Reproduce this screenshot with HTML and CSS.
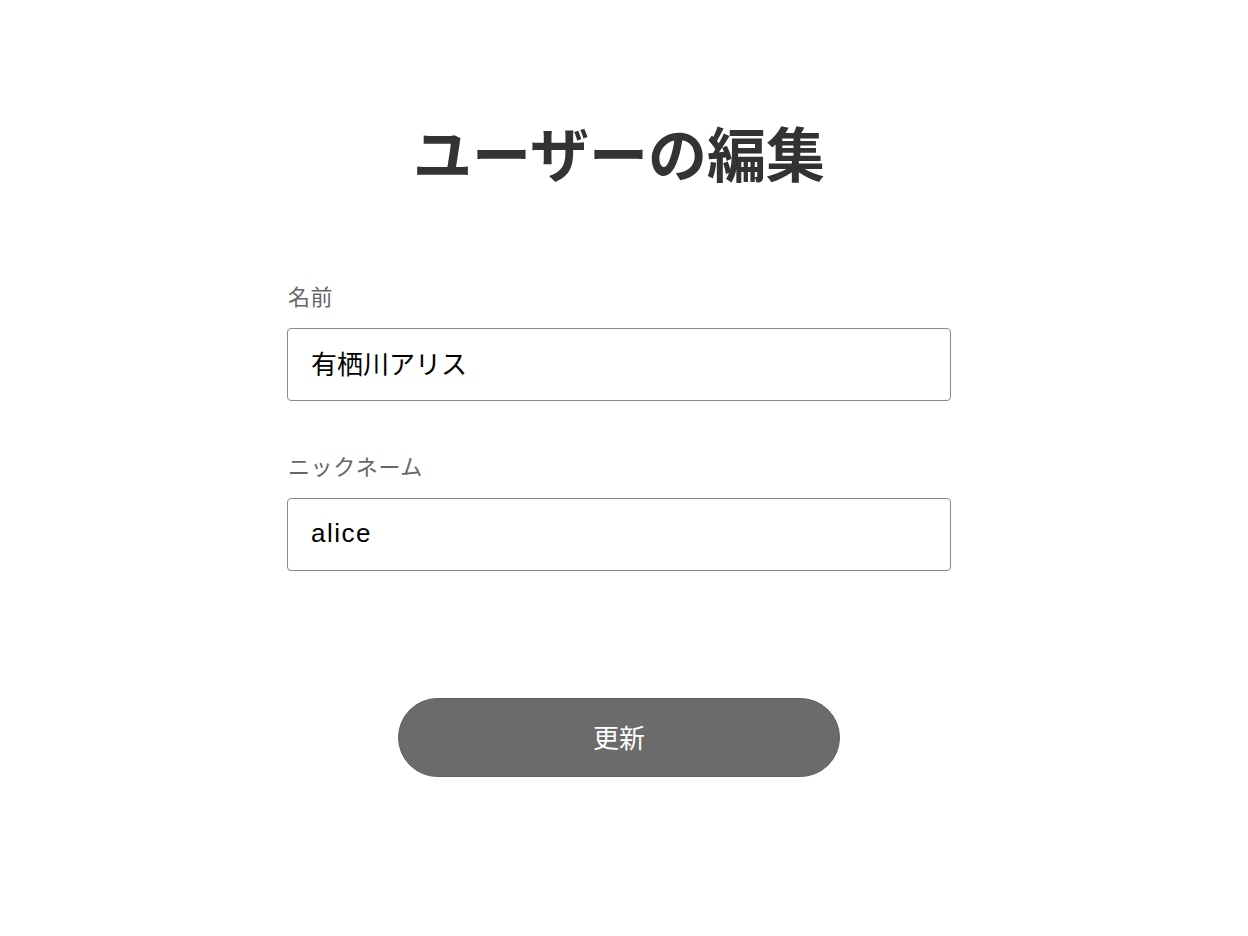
FILE: index.html
```html
<!DOCTYPE html>
<html lang="ja">
<head>
<meta charset="utf-8">
<link rel="stylesheet" href="styles.css">
</head>
<body>
<main class="page">
  <h1 class="title">ユーザーの編集</h1>
  <form class="form">
    <div class="field">
      <label class="label">名前</label>
      <div class="input">有栖川アリス</div>
    </div>
    <div class="field">
      <label class="label">ニックネーム</label>
      <div class="input input-latin">alice</div>
    </div>
    <div class="actions">
      <button type="button" class="btn">更新</button>
    </div>
  </form>
</main>
</body>
</html>
```
FILE: styles.css
```css
html, body { margin: 0; padding: 0; background: #fff; }
body {
  font-family: "Noto Sans CJK JP", "Noto Sans", sans-serif;
  padding-right: 10px;
}
.page {
  display: flex;
  flex-direction: column;
  align-items: center;
  padding-top: 113px;
}
.title {
  margin: 0;
  font-size: 59px;
  line-height: 78px;
  font-weight: 700;
  color: #333;
}
.form {
  width: 664px;
  margin-top: 91px;
  display: flex;
  flex-direction: column;
}
.field { display: flex; flex-direction: column; margin-bottom: 51px; }
.label {
  font-size: 22px;
  line-height: 26px;
  letter-spacing: 0.6px;
  color: #666;
  margin-bottom: 20px;
  padding-left: 1px;
}
.input {
  box-sizing: border-box;
  height: 73px;
  border: 1px solid #8a8a8a;
  border-radius: 4px;
  padding: 0 23px 4px;
  display: flex;
  align-items: center;
  font-size: 26px;
  color: #000;
}
.input-latin {
  font-family: "Liberation Sans", "Noto Sans CJK JP", sans-serif;
  letter-spacing: 1.5px;
  padding-bottom: 2px;
}
.actions { display: flex; justify-content: center; margin-top: 76px; }
.btn {
  width: 442px;
  height: 79px;
  border-radius: 40px;
  background: #6b6b6b;
  border: 1px solid #5e5e5e;
  color: #fff;
  font-family: inherit;
  font-size: 26px;
  padding-bottom: 4px;
  cursor: pointer;
}
```
